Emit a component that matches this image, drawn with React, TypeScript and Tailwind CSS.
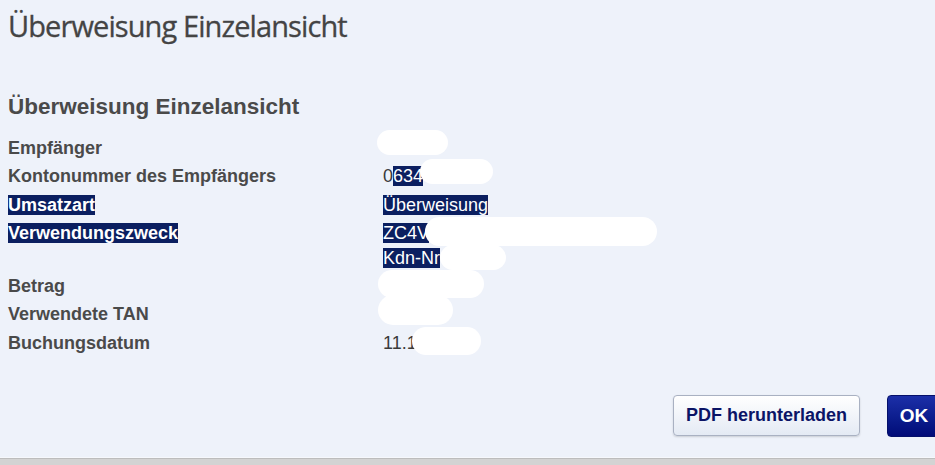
import React from "react";

type Blob = { left: number; top: number; w: number; h: number };

type Row = {
  label: string;
  marked?: boolean;
  lines: React.ReactNode[];
  blobs?: Blob[];
};

const navy = "bg-[#0b1f60] text-white";

const rows: Row[] = [
  { label: "Empfänger", lines: [""], blobs: [{ left: -6, top: -12, w: 71, h: 25 }] },
  {
    label: "Kontonummer des Empfängers",
    lines: [
      <>
        0<span className={navy}>634</span>
      </>,
    ],
    blobs: [{ left: 37, top: -11, w: 73, h: 25 }],
  },
  { label: "Umsatzart", marked: true, lines: [<span className={navy}>Überweisung</span>] },
  {
    label: "Verwendungszweck",
    marked: true,
    lines: [<span className={navy}>ZC4V</span>, <span className={navy}>Kdn-Nr</span>],
    blobs: [
      { left: 42, top: -10, w: 232, h: 29 },
      { left: 57, top: 18, w: 66, h: 25 },
    ],
  },
  { label: "Betrag", lines: [""], blobs: [{ left: -5, top: -10, w: 106, h: 28 }] },
  { label: "Verwendete TAN", lines: [""], blobs: [{ left: -5, top: -13, w: 75, h: 30 }] },
  { label: "Buchungsdatum", lines: ["11.1"], blobs: [{ left: 29, top: -10, w: 69, h: 28 }] },
];

export default function App() {
  return (
    <div className="relative h-[465px] w-[935px] overflow-hidden bg-[#eef2fa] font-['Liberation_Sans',Arial,sans-serif] text-[#4a4a4a]">
      <h1 className="pl-[8px] pt-[4px] font-['Open_Sans',sans-serif] text-[29px] leading-[44px] tracking-[-0.9px] text-[#444444] [-webkit-text-stroke:0.3px_#444444]">
        Überweisung Einzelansicht
      </h1>

      <h2 className="mt-[45px] pl-[8px] text-[22.5px] font-bold leading-[28px]">
        Überweisung Einzelansicht
      </h2>

      <div className="mt-[15px] flex flex-col gap-y-[3.3px] pl-[8px]">
        {rows.map((r) => (
          <div key={r.label} className="flex text-[18px] leading-[25px]">
            <div className="w-[375px] shrink-0 font-bold">
              <span className={r.marked ? navy : ""}>{r.label}</span>
            </div>
            <div className="relative flex flex-col text-[#3a3a3a]">
              {r.lines.map((l, i) => (
                <div key={i} className="h-[25px]">
                  {l}
                </div>
              ))}
              {r.blobs?.map((b, i) => (
                <span
                  key={i}
                  className="absolute rounded-full bg-white"
                  style={{ left: b.left, top: b.top + 6, width: b.w, height: b.h }}
                />
              ))}
            </div>
          </div>
        ))}
      </div>

      <div className="mt-[39px] flex justify-end gap-[27px] mr-[-14px]">
        <button className="h-[41px] w-[187px] rounded-[4px] border border-[#a9b1c2] bg-gradient-to-b from-[#ffffff] to-[#e4eaf4] text-[18px] font-bold text-[#0b1466] shadow-[0_1px_2px_rgba(0,0,0,0.15)]">
          PDF herunterladen
        </button>
        <button className="h-[42px] w-[62px] rounded-[4px] border border-[#05106a] bg-gradient-to-b from-[#1c2fa8] to-[#020b78] pr-[8px] text-[19px] font-bold text-white">
          OK
        </button>
      </div>

      <div className="absolute bottom-0 left-0 right-0 h-[8px] border-t border-[#f6f8fc] bg-[#d3d3d3] shadow-[inset_0_1px_0_#bdbdbd]" />
    </div>
  );
}
